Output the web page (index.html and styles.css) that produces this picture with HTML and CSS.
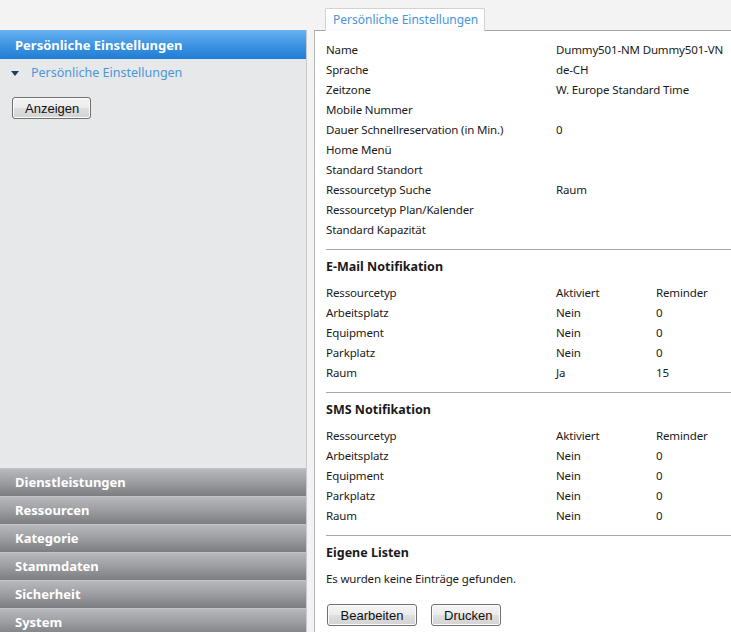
FILE: index.html
```html
<!DOCTYPE html>
<html lang="de">
<head>
<meta charset="utf-8">
<title>Persönliche Einstellungen</title>
<link rel="stylesheet" href="styles.css">
</head>
<body>
<div class="app">
  <aside class="sidebar">
    <div class="side-head">Persönliche Einstellungen</div>
    <div class="side-body">
      <div class="side-item"><span class="caret"></span>Persönliche Einstellungen</div>
      <button class="btn btn-show">Anzeigen</button>
    </div>
    <nav class="side-bars">
      <div class="bar">Dienstleistungen</div>
      <div class="bar">Ressourcen</div>
      <div class="bar">Kategorie</div>
      <div class="bar">Stammdaten</div>
      <div class="bar">Sicherheit</div>
      <div class="bar">System</div>
    </nav>
  </aside>
  <main class="main">
    <div class="tabs"><div class="tab">Persönliche Einstellungen</div></div>
    <section class="panel">
      <div class="grid grid-2">
        <div>Name</div><div>Dummy501-NM Dummy501-VN</div>
        <div>Sprache</div><div>de-CH</div>
        <div>Zeitzone</div><div>W. Europe Standard Time</div>
        <div>Mobile Nummer</div><div></div>
        <div>Dauer Schnellreservation (in Min.)</div><div>0</div>
        <div>Home Menü</div><div></div>
        <div>Standard Standort</div><div></div>
        <div>Ressourcetyp Suche</div><div>Raum</div>
        <div>Ressourcetyp Plan/Kalender</div><div></div>
        <div>Standard Kapazität</div><div></div>
      </div>
      <hr class="sep">
      <h3 class="heading">E-Mail Notifikation</h3>
      <div class="grid grid-3">
        <div>Ressourcetyp</div><div>Aktiviert</div><div>Reminder</div>
        <div>Arbeitsplatz</div><div>Nein</div><div>0</div>
        <div>Equipment</div><div>Nein</div><div>0</div>
        <div>Parkplatz</div><div>Nein</div><div>0</div>
        <div>Raum</div><div>Ja</div><div>15</div>
      </div>
      <hr class="sep">
      <h3 class="heading">SMS Notifikation</h3>
      <div class="grid grid-3">
        <div>Ressourcetyp</div><div>Aktiviert</div><div>Reminder</div>
        <div>Arbeitsplatz</div><div>Nein</div><div>0</div>
        <div>Equipment</div><div>Nein</div><div>0</div>
        <div>Parkplatz</div><div>Nein</div><div>0</div>
        <div>Raum</div><div>Nein</div><div>0</div>
      </div>
      <hr class="sep">
      <h3 class="heading">Eigene Listen</h3>
      <p class="empty">Es wurden keine Einträge gefunden.</p>
      <div class="actions">
        <button class="btn btn-edit">Bearbeiten</button>
        <button class="btn btn-print">Drucken</button>
      </div>
    </section>
  </main>
</div>
</body>
</html>
```
FILE: styles.css
```css
html, body {
  margin: 0;
  padding: 0;
  height: 632px;
  overflow: hidden;
}
body {
  background: #f3f3f3;
  font-family: "Noto Sans", "Open Sans", sans-serif;
  font-size: 12px;
  color: #1a1a1a;
}
.app {
  display: flex;
  align-items: flex-start;
}
.sidebar {
  width: 306px;
  margin-top: 30px;
  background: #e7e8ea;
  border-right: 1px solid #c8c9cc;
  display: flex;
  flex-direction: column;
}
.side-head {
  height: 29px;
  line-height: 30px;
  padding-left: 15px;
  color: #fff;
  font-weight: bold;
  font-size: 13px;
  background: linear-gradient(#68b3f1, #3f94e2 50%, #1f7ed6);
}
.side-body {
  height: 409px;
  display: flex;
  flex-direction: column;
  align-items: flex-start;
}
.side-item {
  display: flex;
  align-items: center;
  height: 27px;
  padding-left: 11px;
  color: #4b96d9;
  font-size: 12.5px;
}
.caret {
  width: 0;
  height: 0;
  border-left: 4px solid transparent;
  border-right: 4px solid transparent;
  border-top: 5px solid #213d5c;
  margin-right: 12px;
  margin-top: 1px;
}
.btn {
  font-family: "Liberation Sans", Arial, sans-serif;
  font-size: 13px;
  color: #111;
  height: 22px;
  padding: 0 12px;
  border: 1px solid #707070;
  border-radius: 3px;
  background: linear-gradient(#f4f4f4, #ececec 48%, #dedede 52%, #d3d3d3);
  box-shadow: inset 0 0 0 1px #fcfcfc;
}
.btn-show {
  margin: 11px 0 0 12px;
  width: 79px;
}
.side-bars {
  display: flex;
  flex-direction: column;
}
.bar {
  height: 28px;
  line-height: 27px;
  box-sizing: border-box;
  padding-left: 15px;
  color: #fff;
  font-weight: bold;
  font-size: 13px;
  background: linear-gradient(#b8b9bd, #9c9da1 50%, #7c7d81);
  border-top: 1px solid #c3c4c7;
}
.main {
  flex: 1;
  margin-left: 7px;
}
.tabs {
  height: 30px;
  display: flex;
  align-items: flex-end;
  padding-left: 11px;
}
.tab {
  height: 23px;
  box-sizing: border-box;
  width: 160px;
  padding-left: 7px;
  line-height: 22px;
  color: #4a95d8;
  font-size: 12px;
  border: 1px solid #d2d2d2;
  border-bottom: none;
  border-radius: 2px 2px 0 0;
  background: linear-gradient(#ffffff, #fbfbfb);
  position: relative;
  top: 1px;
}
.panel {
  background: #fff;
  border-top: 1px solid #a5a5a5;
  border-left: 1px solid #b5b5b5;
  height: 620px;
  padding: 9px 0 0 11px;
  font-size: 11.5px;
  letter-spacing: -0.15px;
}
.grid {
  display: grid;
  line-height: 20px;
  white-space: nowrap;
}
.grid-2 {
  grid-template-columns: 230px 1fr;
}
.grid-3 {
  grid-template-columns: 230px 100px 1fr;
}
.sep {
  border: none;
  border-top: 1px solid #a7a7a7;
  margin: 9px 0 0 0;
  height: 0;
}
.heading {
  margin: 8px 0 7px 0;
  font-size: 12.5px;
  font-weight: bold;
  line-height: 18px;
  letter-spacing: 0;
}
.empty {
  margin: 5px 0 0 0;
  line-height: 20px;
}
.actions {
  display: flex;
  gap: 14px;
  margin-top: 15px;
  letter-spacing: 0;
}
.btn-edit {
  width: 90px;
  margin-left: 1px;
}
.btn-print {
  width: 70px;
}
```
